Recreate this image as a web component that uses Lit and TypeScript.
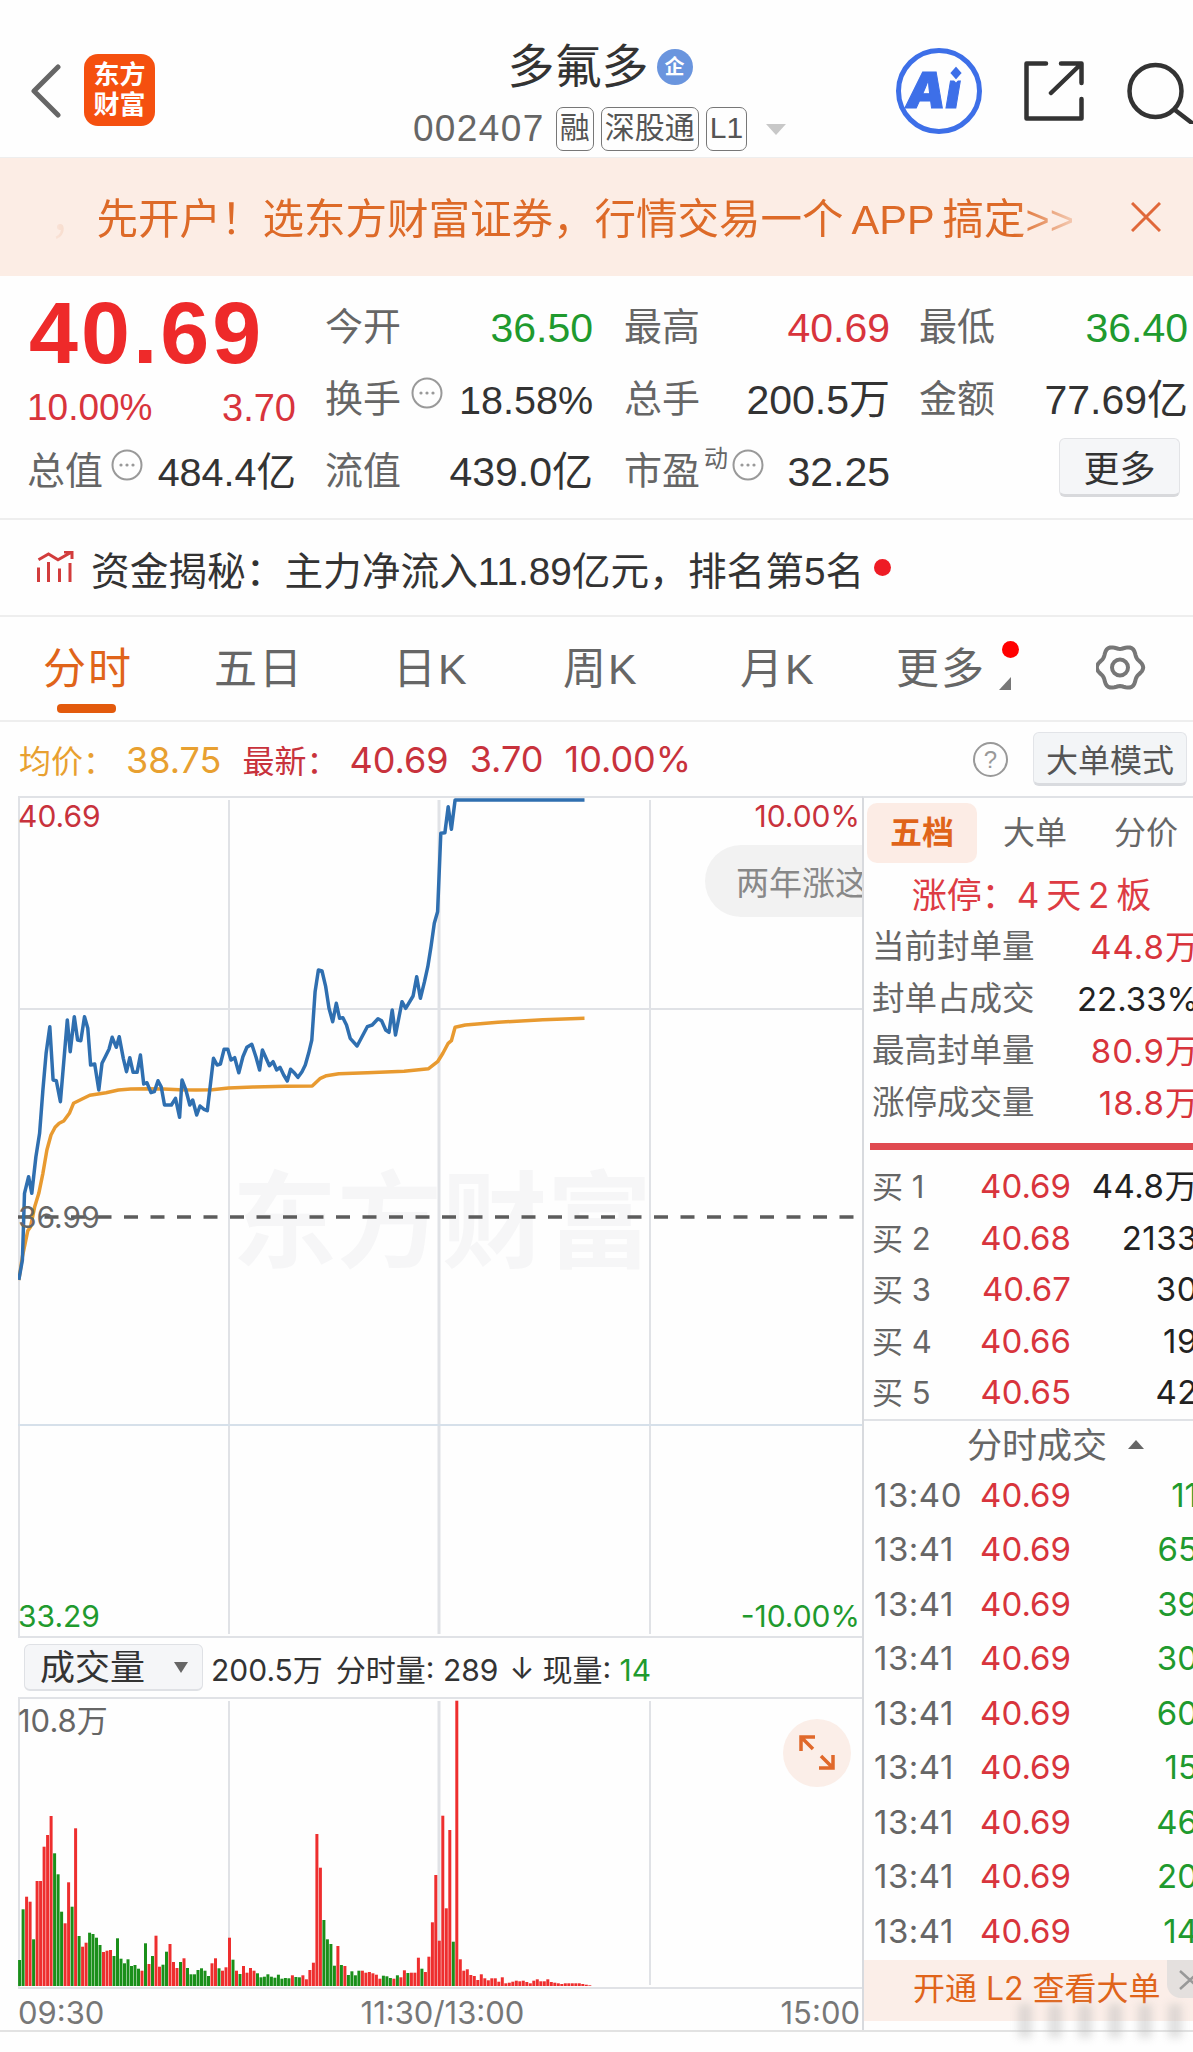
import {css, html, svg, LitElement} from "lit";
import {customElement} from "lit/decorators.js";

// price curves, traced in crop pixels: x is scaled by 2.45, y by 3
const PRICE: number[][] = [[46,1470],[55,1410],[60,1210],[70,1160],[78,1210],[88,1100],[97,1030],[105,900],[113,790],[122,710],[130,870],[138,872],[148,935],[165,690],[172,785],[182,680],[190,750],[198,752],[207,680],[215,715],[222,825],[232,822],[242,900],[250,820],[258,800],[267,778],[275,742],[285,772],[292,740],[302,805],[310,845],[318,803],[326,847],[336,847],[344,795],[352,882],[360,878],[370,908],[378,905],[387,872],[395,890],[403,945],[420,945],[430,925],[440,982],[446,870],[455,898],[465,945],[472,930],[482,975],[490,948],[500,958],[508,962],[523,805],[532,825],[540,822],[549,778],[558,778],[566,810],[575,803],[585,848],[595,800],[605,772],[617,763],[627,800],[636,840],[643,780],[652,805],[660,827],[669,815],[678,840],[686,832],[695,855],[704,873],[712,838],[722,850],[730,862],[740,845],[748,825],[756,790],[764,750],[772,605],[780,540],[789,543],[798,590],[806,655],[815,695],[824,640],[832,685],[840,683],[849,705],[858,745],[875,768],[885,745],[900,710],[912,705],[926,686],[935,692],[945,720],[953,727],[961,660],[969,735],[985,635],[994,655],[1012,618],[1021,560],[1030,625],[1040,575],[1048,530],[1056,470],[1064,400],[1072,365],[1080,130],[1090,128],[1098,50],[1106,118],[1115,30],[1432,30]];
const AVG: number[][] = [[46,1470],[55,1400],[68,1322],[75,1310],[85,1250],[95,1210],[105,1150],[115,1080],[125,1035],[135,1012],[145,1000],[156,993],[170,970],[180,940],[200,928],[220,916],[240,912],[260,908],[290,900],[320,897],[360,896],[400,897],[440,899],[480,900],[520,899],[560,894],[620,891],[700,889],[765,888],[785,865],[800,857],[830,851],[900,848],[990,844],[1050,836],[1072,815],[1085,790],[1098,760],[1106,752],[1115,712],[1140,705],[1220,697],[1330,689],[1432,685]];

// one bar per minute: colour and top edge in the same crop pixels
const VOLUME = "g1020 g868 r830 r845 g958 r783 r783 r680 r645 r588 g700 g763 g875 r910 r787 g860 r625 g948 r980 r968 g938 g942 g953 g975 r996 r992 r990 g1008 g955 g1016 g1030 g1018 g1038 g1035 g1046 r1052 g970 r1032 g1008 r947 r1040 g1034 g995 r972 r1026 r1044 g1026 r1015 g1044 g1063 g1063 g1050 g1045 g1052 g1068 r1030 r1015 g1045 r1052 r1042 r953 g1019 r1052 g1062 r1038 r1058 r1044 r1052 g1060 g1072 g1070 g1063 g1070 g1073 g1064 g1076 g1074 g1075 r1066 g1071 g1072 r1066 r1078 r1050 r1028 r642 r743 g900 g958 g972 g1037 r978 g1035 r1038 g1065 g1054 g1066 g1052 r1052 r1058 r1056 r1060 r1064 r1076 g1067 g1069 g1074 r1076 g1066 r1072 r1051 g1059 r1058 r1058 r1013 g1046 r1056 r1010 r907 r765 r962 r587 r865 r630 g965 r242 r1018 r1052 r1048 r1065 r1068 r1080 r1063 r1075 r1081 r1075 r1075 r1085 r1072 r1090 r1088 r1085 r1082 r1084 r1082 r1086 r1090 r1082 r1078 r1084 r1084 r1078 r1086 r1088 r1090 r1092 r1090 r1090 r1090 r1090 r1090 r1092 r1094 r1096".split(" ");

const SEAL = [["当前封单量", "44.8万", "up"], ["封单占成交", "22.33%", ""], ["最高封单量", "80.9万", "up"], ["涨停成交量", "18.8万", "up"]];
const BIDS = [["买 1", "40.69", "44.8万"], ["买 2", "40.68", "2133"], ["买 3", "40.67", "30"], ["买 4", "40.66", "19"], ["买 5", "40.65", "42"]];
const TICKS = [["13:40", "11"], ["13:41", "65"], ["13:41", "39"], ["13:41", "30"], ["13:41", "60"], ["13:41", "15"], ["13:41", "46"], ["13:41", "20"], ["13:41", "14"]];

function toPoints(data: number[][]): string {
    return data.map(([x, y]) => `${(x / 2.45 - 18).toFixed(1)},${(y / 3 - 6).toFixed(1)}`).join(" ");
}

function gearPath(): string {
    var d = "";
    for (var a = 0; a < 360; a += 5) {
        const t = a * Math.PI / 180;
        const r = 20.4 + 1.9 * Math.cos(6 * t);
        d += `${a == 0 ? "M" : "L"}${(24 + r * 1.04 * Math.cos(t)).toFixed(1)} ${(22.5 + r * Math.sin(t)).toFixed(1)}`;
    }
    return d + "Z";
}

const dots = html`<svg class="dots" width="32" height="32" viewBox="0 0 32 32"><circle cx="16" cy="16" r="14.5"></circle><circle class="dot" cx="10" cy="16" r="1.6"></circle><circle class="dot" cx="16" cy="16" r="1.6"></circle><circle class="dot" cx="22" cy="16" r="1.6"></circle></svg>`;

@customElement("app-root")
export class AppRoot extends LitElement {
    private renderHeader() {
        return html`
            <header class="head">
                <div class="head-left">
                    <svg width="32" height="56" viewBox="0 0 32 56"><path class="back" d="M28 5 L4 29 L28 53"></path></svg>
                    <div class="logo">东方<br>财富</div>
                </div>
                <div class="head-mid">
                    <div class="title">多氟多<span class="qi">企</span></div>
                    <div class="code-row">
                        <span class="code">002407</span>
                        <span class="tag">融</span><span class="tag">深股通</span><span class="tag">L1</span>
                        <span class="caret"></span>
                    </div>
                </div>
                <div class="head-right">
                    <svg width="88" height="88" viewBox="0 0 88 88">
                        <circle class="ai-ring" cx="44" cy="44" r="40.5"></circle>
                        <text class="ai-text" x="11" y="61">Ai</text>
                        <path class="ai-star" d="M61 18 L68 26 L61 34 L54 26 Z"></path>
                    </svg>
                    <svg class="share" width="60" height="60" viewBox="0 0 60 60">
                        <path d="M22 2.5 H2.5 V57.5 H57.5 V38 M37 2.5 H57.5 V22 M27 32 L57 3"></path>
                    </svg>
                    <svg class="search" width="70" height="66" viewBox="0 0 70 66">
                        <circle cx="32.5" cy="33" r="26"></circle><path d="M52 52 L69 65"></path>
                    </svg>
                </div>
            </header>
        `;
    }

    private renderBanner() {
        return html`
            <div class="banner">
                <div class="marquee"><span class="comma">&#xFF0C;</span>先开户&#xFF01;选东方财富证券&#xFF0C;行情交易一个<span class="latin">APP</span>搞定&gt;&gt;</div>
                <svg class="banner-x" width="30" height="30" viewBox="0 0 30 30"><path d="M1 1 L29 29 M29 1 L1 29"></path></svg>
            </div>
        `;
    }

    private renderQuote() {
        return html`
            <section class="quote">
                <div class="cell"><span class="price">40.69</span></div>
                <div class="cell c2"><span class="lb">今开</span><span class="val down">36.50</span></div>
                <div class="cell"><span class="lb">最高</span><span class="val up">40.69</span></div>
                <div class="cell"><span class="lb">最低</span><span class="val down">36.40</span></div>

                <div class="cell chg"><span>10.00%</span><span class="val">3.70</span></div>
                <div class="cell c2"><span class="lb">换手</span>${dots}<span class="val tight">18.58%</span></div>
                <div class="cell"><span class="lb">总手</span><span class="val">200.5万</span></div>
                <div class="cell"><span class="lb">金额</span><span class="val">77.69亿</span></div>

                <div class="cell total"><span class="lb">总值</span>${dots}<span class="val tight">484.4亿</span></div>
                <div class="cell c2"><span class="lb">流值</span><span class="val">439.0亿</span></div>
                <div class="cell"><span class="lb">市盈</span><sup class="dyn">动</sup>${dots}<span class="val">32.25</span></div>
                <div class="cell"><button class="more">更多</button></div>
            </section>
        `;
    }

    private renderFunds() {
        return html`
            <div class="funds">
                <svg class="funds-icon" width="38" height="33" viewBox="0 0 38 33">
                    <path d="M2.5 16.5V31 M12.5 11V31 M23.5 17.5V31 M34 12V31 M2.5 8.7 L12.5 3 L22 8.7 L35.7 1 M28 1 H36 V8"></path>
                </svg>
                <span>资金揭秘&#xFF1A;主力净流入11.89亿元&#xFF0C;排名第5名</span>
                <i class="funds-dot"></i>
            </div>
        `;
    }

    private renderTabs() {
        return html`
            <nav class="tabs">
                <div class="tab on">分时</div>
                <div class="tab">五日</div>
                <div class="tab">日K</div>
                <div class="tab">周K</div>
                <div class="tab">月K</div>
                <div class="tab more-tab">更多<i class="tab-dot"></i><i class="tab-tri"></i></div>
                <svg class="gear" width="50" height="46" viewBox="0 0 50 46">
                    <path d=${gearPath()}></path><circle cx="24" cy="22.5" r="8"></circle>
                </svg>
            </nav>
        `;
    }

    private renderInfo() {
        return html`
            <div class="info">
                <span class="avg"><b>均价&#xFF1A;</b>38.75</span>
                <span class="last"><b>最新&#xFF1A;</b>40.69</span>
                <span class="last">3.70</span>
                <span class="last">10.00%</span>
                <span class="help">?</span>
                <button class="mode">大单模式</button>
            </div>
        `;
    }

    private renderPlot() {
        return html`
            <div class="plot">
                <div class="mark">东方财富</div>
                <svg class="plot-svg" width="844" height="842" viewBox="0 0 844 842">
                    <path class="grid" d="M0 1H844 M1 0V842 M0 841H844 M0 213H844 M211 4V838 M632 4V838"></path>
                    <path class="grid wide" d="M421 4V838"></path>
                    <path class="grid blue" d="M0 629H844"></path>
                    <path class="dash" d="M0 421H844"></path>
                    <polyline class="avg-line" points=${toPoints(AVG)}></polyline>
                    <polyline class="price-line" points=${toPoints(PRICE)}></polyline>
                </svg>
                <span class="tag-l top up-t">40.69</span>
                <span class="tag-l mid">36.99</span>
                <span class="tag-l low down">33.29</span>
                <span class="tag-r top up-t">10.00%</span>
                <span class="tag-r low down">-10.00%</span>
                <div class="pill">两年涨这</div>
            </div>
        `;
    }

    private renderVolume() {
        return html`
            <div class="vol-head">
                <div class="select">成交量<i class="select-tri"></i></div>
                <span>200.5万</span><span>分时量: 289</span><span class="arrow">↓</span><span>现量: <em class="down">14</em></span>
            </div>
            <div class="vol">
                <svg width="844" height="292" viewBox="0 0 844 292">
                    <path class="grid" d="M0 1H844 M1 0V292 M0 291H844 M211 4V288 M632 4V288"></path>
                    <path class="grid wide" d="M421 4V288"></path>
                    ${VOLUME.map((v, i) => {
                        const top = Number(v.slice(1)) / 3 - 77;
                        const x = (48 + i * 8.57) / 2.45 - 18 - 1.5;
                        return svg`<rect class=${v[0]} x=${x.toFixed(1)} y=${top.toFixed(1)} width="3" height=${(289 - top).toFixed(1)}></rect>`;
                    })}
                </svg>
                <span class="vol-max">10.8万</span>
                <div class="expand">
                    <svg width="68" height="68" viewBox="0 0 68 68"><path d="M18 32 V18 H32 M18 18 L30 30 M36 49 H50 V36 M50 49 L38 37"></path></svg>
                </div>
            </div>
            <div class="axis"><span>09:30</span><span>11:30/13:00</span><span>15:00</span></div>
        `;
    }

    private renderSide() {
        return html`
            <aside class="side">
                <div class="side-tabs"><div class="side-tab on">五档</div><div class="side-tab">大单</div><div class="side-tab">分价</div></div>
                <div class="limit">涨停&#xFF1A;4 天 2 板</div>
                ${SEAL.map(([a, b, c]) => html`<div class="seal"><span class="gray">${a}</span><span class="seal-v ${c}">${b}</span></div>`)}
                <div class="bar"></div>
                <div class="bids">
                    ${BIDS.map(([a, b, c]) => html`<div class="row bid"><span class="gray">${a}</span><span class="px">${b}</span><span class="qty">${c}</span></div>`)}
                </div>
                <div class="ticks-head">分时成交<i class="up-tri"></i></div>
                ${TICKS.map(([a, b]) => html`<div class="row tick"><span class="gray t">${a}</span><span class="px">40.69</span><span class="qty down">${b}</span></div>`)}
                <div class="l2">
                    开通 L2 查看大单
                    <div class="l2-x"><svg width="22" height="22" viewBox="0 0 22 22"><path d="M2 2 L22 20 M22 2 L2 20"></path></svg></div>
                </div>
            </aside>
        `;
    }

    render() {
        return html`
            ${this.renderHeader()}
            ${this.renderBanner()}
            ${this.renderQuote()}
            ${this.renderFunds()}
            ${this.renderTabs()}
            ${this.renderInfo()}
            <div class="charts">
                <div class="main">
                    ${this.renderPlot()}
                    ${this.renderVolume()}
                </div>
                ${this.renderSide()}
            </div>
            <div class="smudge"></div>
        `;
    }

    static styles = css`
        :host {
            display: block;
            position: relative;
            width: 1193px;
            height: 2052px;
            overflow: hidden;
            background: #fefefe;
            color: #333;
            font-family: "Liberation Sans", "Noto Sans CJK SC", sans-serif;
        }
        * { box-sizing: border-box; }
        i, em, b { font-style: normal; font-weight: inherit; }
        svg { display: block; flex: none; }
        button { font-family: inherit; }
        .up { color: #d8343c; }
        .up-t { color: #c8323c; }
        .down { color: #1f9a2e; }
        .gray { color: #666; }

        /* header */
        .head { display: grid; grid-template-columns: 413px 373px 1fr; height: 158px; border-bottom: 1px solid #eee; }
        .head-left { display: flex; align-items: center; align-self: start; padding: 54px 0 0 30px; gap: 22px; }
        .back { fill: none; stroke: #666; stroke-width: 5; stroke-linecap: round; stroke-linejoin: round; }
        .logo { width: 71px; height: 72px; border-radius: 14px; background: #f5500f; color: #fff; font-size: 26px; line-height: 30px; font-weight: 700; text-align: center; padding-top: 6px; }
        .head-mid { display: flex; flex-direction: column; align-items: center; padding-top: 44px; }
        .title { display: flex; align-items: center; font-size: 47px; line-height: 46px; height: 46px; color: #333; margin-left: 1px; }
        .qi { width: 36px; height: 36px; border-radius: 50%; background: #6a95de; color: #fff; font-size: 20px; line-height: 36px; font-weight: 700; text-align: center; margin-left: 8px; }
        .code-row { display: flex; align-items: center; gap: 7px; margin-top: 17px; white-space: nowrap; }
        .code { font-size: 37px; letter-spacing: 1.4px; color: #666; margin-right: 4px; }
        .tag { height: 44px; padding: 0 3px; border: 1.5px solid #777; border-radius: 7px; font-size: 30px; line-height: 40px; color: #555; }
        .caret { width: 0; height: 0; border-left: 10px solid transparent; border-right: 10px solid transparent; border-top: 11px solid #c8c8c8; margin-left: 12px; }
        .head-right { display: flex; align-items: center; align-self: start; padding: 47px 0 0 109px; }
        .ai-ring { fill: none; stroke: #3d6fe8; stroke-width: 5; }
        .ai-text { fill: #3d6fe8; stroke: #3d6fe8; stroke-width: 1; font-family: Inter, sans-serif; font-weight: 900; font-style: italic; font-size: 50px; }
        .ai-star { fill: #3d6fe8; stroke: #fefefe; stroke-width: 2; }
        .share { margin-left: 41px; }
        .share path { fill: none; stroke: #333; stroke-width: 4.5; stroke-linecap: round; stroke-linejoin: round; }
        .search { margin-left: 39px; }
        .search circle, .search path { fill: none; stroke: #333; stroke-width: 4.5; stroke-linecap: round; }

        /* banner */
        .banner { display: flex; align-items: center; height: 118px; background: #fcede5; }
        .marquee { width: 1040px; margin: -2px 0 0 40px; padding-left: 10px; font-size: 41.5px; color: #dd6a28; white-space: nowrap; overflow: hidden;
            -webkit-mask-image: linear-gradient(90deg, transparent 0, rgba(0,0,0,.15) 30px, #000 56px, #000 975px, rgba(0,0,0,.3) 1030px);
            mask-image: linear-gradient(90deg, transparent 0, rgba(0,0,0,.15) 30px, #000 56px, #000 975px, rgba(0,0,0,.3) 1030px); }
        .comma { margin-right: 5px; }
        .latin { margin: 0 8px; }
        .banner-x { margin-left: 51px; }
        .banner-x path { fill: none; stroke: #e0683a; stroke-width: 3; }

        /* quote */
        .quote { display: grid; grid-template-columns: 296px 299px 295px 274px; grid-auto-rows: 72px; height: 244px; padding: 16px 0 0 29px; border-bottom: 2px solid #eee; }
        .cell { display: flex; align-items: center; padding-right: 29px; white-space: nowrap; }
        .cell.c2 { padding-right: 31px; }
        .cell:nth-child(4n) { padding-right: 5px; }
        .price { font-size: 88px; line-height: 1; font-weight: 700; letter-spacing: 3px; color: #ee2a2a; margin-top: 9px; }
        .lb { font-size: 38px; line-height: 44px; color: #666; margin-top: -3px; }
        .val { margin-left: auto; font-size: 41px; line-height: 46px; }
        .val.tight { font-size: 39.5px; }
        .chg { font-size: 37px; line-height: 46px; color: #d8343c; padding: 16px 29px 0 0; margin-left: -2px; }
        .chg .val { font-size: 38px; }
        .total .lb { margin-left: -2px; }
        .dots { margin: -14px 0 0 10px; fill: none; stroke: #999; stroke-width: 2; }
        .total .dots { margin-left: 8px; }
        .dots .dot { fill: #999; stroke: none; }
        .dyn { font-size: 24px; color: #666; line-height: 1; margin: -26px -26px 0 4px; width: 26px; }
        .dyn + .dots { margin-left: 28px; }
        .more { width: 121px; height: 59px; margin: -10px 0 0 140px; background: #f5f6f8; border: 1px solid #e2e3e6; border-bottom: 3px solid #d8d9dc; border-radius: 6px; font-size: 36px; color: #333; padding: 0; }

        /* funds */
        .funds { display: flex; align-items: center; height: 97px; padding-left: 36px; border-bottom: 2px solid #eee; font-size: 38.7px; color: #333; white-space: nowrap; }
        .funds-icon { margin-right: 17px; }
        .funds-icon path { fill: none; stroke: #d23c3c; stroke-width: 3; }
        .funds-dot { width: 17px; height: 17px; border-radius: 50%; background: #ee1c25; margin-left: 10px; }

        /* tabs */
        .tabs { display: grid; grid-template-columns: 171px 179px 170px 177px 156px 198px 50px; align-items: start; height: 105px; padding: 30px 0 0 43px; border-bottom: 2px solid #eee; }
        .tab { position: relative; font-size: 43px; line-height: 44px; letter-spacing: 2px; color: #666; }
        .tab.on { color: #e0641a; }
        .tab.on::after { content: ""; display: block; width: 59px; height: 9px; border-radius: 4px; background: #e35a0c; margin: 13px 0 0 14px; }
        .tab-dot { position: absolute; left: 106px; top: -6px; width: 17px; height: 17px; border-radius: 50%; background: #f00; }
        .tab-tri { position: absolute; left: 103px; top: 30px; width: 0; height: 0; border-left: 12px solid transparent; border-bottom: 13px solid #777; }
        .gear { margin: -2px 0 0 2px; fill: none; stroke: #777; stroke-width: 4; stroke-linejoin: round; }

        /* info row */
        .info { display: flex; align-items: center; gap: 21px; height: 74px; padding: 0 6px 0 19px; font-family: Inter, "Noto Sans CJK SC", sans-serif; font-size: 36px; white-space: nowrap; }
        .info b { font-family: "Noto Sans CJK SC", sans-serif; font-size: 32px; margin-right: 11px; }
        .avg { color: #e8a030; }
        .last { color: #c8323c; }
        .help { width: 35px; height: 35px; margin-left: auto; border: 2px solid #999; border-radius: 50%; font-size: 24px; line-height: 31px; text-align: center; color: #999; font-family: "Liberation Sans", sans-serif; margin-right: 4px; }
        .mode { width: 154px; height: 54px; padding: 0; background: #f3f5f7; border: 1px solid #e2e4e8; border-bottom: 3px solid #d9dbdf; border-radius: 6px; font-family: "Noto Sans CJK SC", sans-serif; font-size: 32px; line-height: 1; color: #555; }

        /* charts */
        .charts { display: grid; grid-template-columns: 862px 331px; height: 1236px; border-bottom: 2px solid #e2e2e2; }
        .main { padding-left: 18px; }
        .plot { position: relative; width: 844px; height: 842px; overflow: hidden; font-family: Inter, "Noto Sans CJK SC", sans-serif; }
        .mark { position: absolute; left: 214px; top: 352px; font-family: "Noto Sans CJK SC", sans-serif; font-size: 105px; line-height: 130px; font-weight: 700; color: #f6f6f7; white-space: nowrap; }
        .plot-svg { position: relative; }
        .grid { fill: none; stroke: #e0e2e6; stroke-width: 2; }
        .grid.wide { stroke-width: 3; }
        .grid.blue { stroke: #d6e0ea; }
        .dash { fill: none; stroke: #5c5c5c; stroke-width: 3.5; stroke-dasharray: 14 12.5; }
        .price-line { fill: none; stroke: #2f6fb0; stroke-width: 3.5; stroke-linejoin: round; }
        .avg-line { fill: none; stroke: #e89a30; stroke-width: 3.5; stroke-linejoin: round; }
        .tag-l, .tag-r { position: absolute; font-size: 30px; line-height: 30px; white-space: nowrap; }
        .tag-l { left: 0; }
        .tag-r { right: 2px; }
        .top { top: 5px; }
        .mid { top: 406px; color: #666; }
        .low { top: 805px; }
        .pill { position: absolute; left: 687px; top: 49px; width: 200px; height: 72px; padding-left: 31px; border-radius: 36px; background: #f2f2f2; color: #888; font-family: "Noto Sans CJK SC", sans-serif; font-size: 33px; line-height: 72px; white-space: nowrap; }
        .vol-head { display: flex; align-items: center; gap: 13px; height: 59px; font-family: Inter, "Noto Sans CJK SC", sans-serif; font-size: 30px; color: #333; white-space: nowrap; }
        .arrow { margin: 0 -5px 0 -2px; }
        .select { display: flex; align-items: center; width: 179px; height: 47px; margin: 0 -5px 0 6px; padding-left: 15px; background: #f5f6f8; border: 1px solid #dfe1e5; border-bottom-width: 2px; border-radius: 6px; font-size: 35px; line-height: 1; }
        .select-tri { width: 0; height: 0; margin-left: 29px; border-left: 7px solid transparent; border-right: 7px solid transparent; border-top: 11px solid #666; }
        .vol { position: relative; width: 844px; height: 292px; }
        .r { fill: #ee2e2e; }
        .g { fill: #1a8f1a; }
        .vol-max { position: absolute; left: 0; top: 9px; font-family: Inter, "Noto Sans CJK SC", sans-serif; font-size: 31px; line-height: 30px; color: #666; }
        .expand { position: absolute; left: 765px; top: 22px; width: 68px; height: 68px; border-radius: 50%; background: #fbeee8; }
        .expand path { fill: none; stroke: #e0682a; stroke-width: 3.5; }
        .axis { display: flex; justify-content: space-between; height: 41px; padding: 7px 2px 0 0; font-family: Inter, sans-serif; font-size: 31px; line-height: 34px; color: #777; }

        /* right panel */
        .side { display: flex; flex-direction: column; border-left: 2px solid #d8dade; border-top: 2px solid #e0e2e6; height: 1234px; overflow: hidden; font-family: Inter, "Noto Sans CJK SC", sans-serif; font-size: 33px; white-space: nowrap; color: #222; }
        .side-tabs { display: grid; grid-template-columns: 110px 85px 1fr; column-gap: 26px; height: 60px; margin: 5px 0 0 3px; flex: none; }
        .side-tab { font-size: 32px; line-height: 60px; color: #666; }
        .side-tab.on { text-align: center; background: #fcece5; border-radius: 10px; color: #e0641a; font-weight: 700; }
        .limit { height: 52px; margin-top: 6px; flex: none; font-size: 35px; line-height: 52px; word-spacing: -3px; text-align: center; color: #dd3b43; padding-left: 6px; }
        .seal { display: flex; justify-content: space-between; height: 52px; flex: none; padding-left: 8px; line-height: 52px; font-size: 33px; margin-right: -6px; }
        .seal .gray { font-size: 32.5px; }
        .seal-v.up { letter-spacing: 1px; }
        .bar { height: 7px; margin: 14px 0 0 6px; flex: none; background: #e04a50; }
        .bids { margin-top: 11px; flex: none; }
        .row { display: grid; grid-template-columns: 90px 109px 1fr; padding-left: 8px; margin-right: -5px; flex: none; }
        .bid { height: 51.5px; line-height: 51.5px; }
        .bid .gray { font-size: 31px; }
        .bid .qty { letter-spacing: .5px; }
        .tick { height: 54.5px; line-height: 54.5px; }
        .t { padding-left: 2px; letter-spacing: .5px; }
        .px { color: #d8343c; text-align: right; }
        .qty { text-align: right; }
        .ticks-head { height: 49px; flex: none; padding-top: 1px; border-top: 2px solid #e0e2e6; font-size: 35px; line-height: 50px; color: #666; padding-left: 103px; display: flex; align-items: center; }
        .up-tri { width: 0; height: 0; margin-left: 21px; border-left: 8px solid transparent; border-right: 8px solid transparent; border-bottom: 9px solid #666; }
        .l2 { position: relative; height: 61px; margin-top: 2px; flex: none; padding-left: 49px; background: #fbeee8; color: #e0641a; font-size: 32px; line-height: 58px; }
        .l2-x { position: absolute; right: 0; top: 0; width: 26px; height: 38px; padding: 9px 0 0 11px; background: #e4e0de; border-bottom-left-radius: 14px; }
        .l2-x path { fill: none; stroke: #999; stroke-width: 2.5; }
        .smudge { position: absolute; left: 1018px; top: 2004px; width: 165px; height: 34px; background: repeating-linear-gradient(90deg, #bbb 0 14px, transparent 14px 30px); filter: blur(4px); opacity: .45; }
    `;
}
